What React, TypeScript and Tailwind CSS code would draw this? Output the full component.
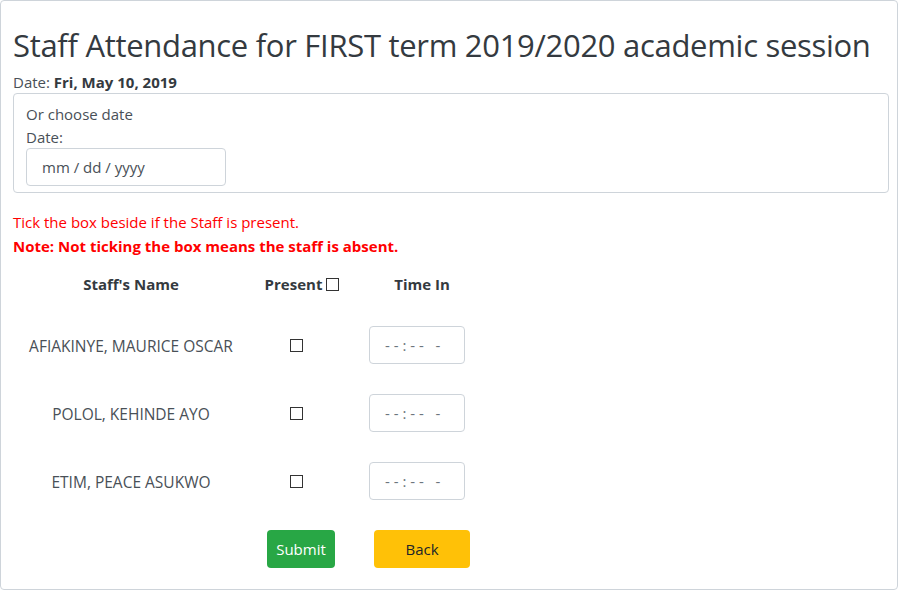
const staff = ["AFIAKINYE, MAURICE OSCAR", "POLOL, KEHINDE AYO", "ETIM, PEACE ASUKWO"];

function Box() {
  return <span className="inline-block w-[13px] h-[13px] border border-[#333] bg-white" />;
}

function TimeBox() {
  return (
    <div className="w-[96px] h-[38px] border border-[#ced4da] rounded-[4px] flex items-center pl-[15px] text-[15px] text-[#6c757d] whitespace-pre">
      {"- - : - -   -"}
    </div>
  );
}

export default function App() {
  return (
    <div className="w-[898px] h-[590px] bg-white font-['Open_Sans',sans-serif] text-[#495057]">
      <div className="h-[590px] border border-[#ced4da] rounded-[4px] pl-[12px] pr-[8px] pt-[24px]">
        <h2 className="text-[31px] leading-[40px] font-normal text-[#343a40] tracking-[-0.3px]">
          Staff Attendance for FIRST term 2019/2020 academic session
        </h2>
        <div className="mt-[7px] text-[15px] leading-[20px]">
          Date: <b className="text-[#343a40]">Fri, May 10, 2019</b>
        </div>
        <div className="mt-[1px] border border-[#ced4da] rounded-[4px] h-[100px] px-[12px] pt-[8px]">
          <div className="text-[15px] leading-[24px]">Or choose date</div>
          <div className="text-[15px] leading-[22px]">Date:</div>
          <div className="w-[200px] h-[38px] border border-[#ced4da] rounded-[4px] flex items-center pl-[15px] text-[15px] text-[#495057]">
            mm / dd / yyyy
          </div>
        </div>
        <div className="mt-[17px] text-[15px] leading-[24px] text-[#ff0000]">Tick the box beside if the Staff is present.</div>
        <div className="text-[15px] leading-[24px] text-[#ff0000] font-bold">Note: Not ticking the box means the staff is absent.</div>
        <div className="w-[470px]">
          <div className="grid grid-cols-[236px_100px_134px] h-[53px] items-center font-bold text-[15px] text-[#343a40]">
            <div className="text-center">Staff's Name</div>
            <div className="flex items-center justify-center gap-[4px] pl-[6px]">Present <Box /></div>
            <div className="text-center pl-[12px]">Time In</div>
          </div>
          {staff.map((s) => (
            <div key={s} className="grid grid-cols-[236px_100px_134px] h-[68px] items-center text-[15.5px]">
              <div className="text-center pt-[3px]">{s}</div>
              <div className="flex justify-center pr-[6px]"><Box /></div>
              <div className="pl-[20px]"><TimeBox /></div>
            </div>
          ))}
          <div className="flex mt-[15px] pl-[254px] gap-[39px]">
            <button className="w-[68px] h-[38px] rounded-[4px] bg-[#28a745] text-white text-[15px]">Submit</button>
            <button className="w-[96px] h-[38px] rounded-[4px] bg-[#ffc107] text-[#212529] text-[15px]">Back</button>
          </div>
        </div>
      </div>
    </div>
  );
}
